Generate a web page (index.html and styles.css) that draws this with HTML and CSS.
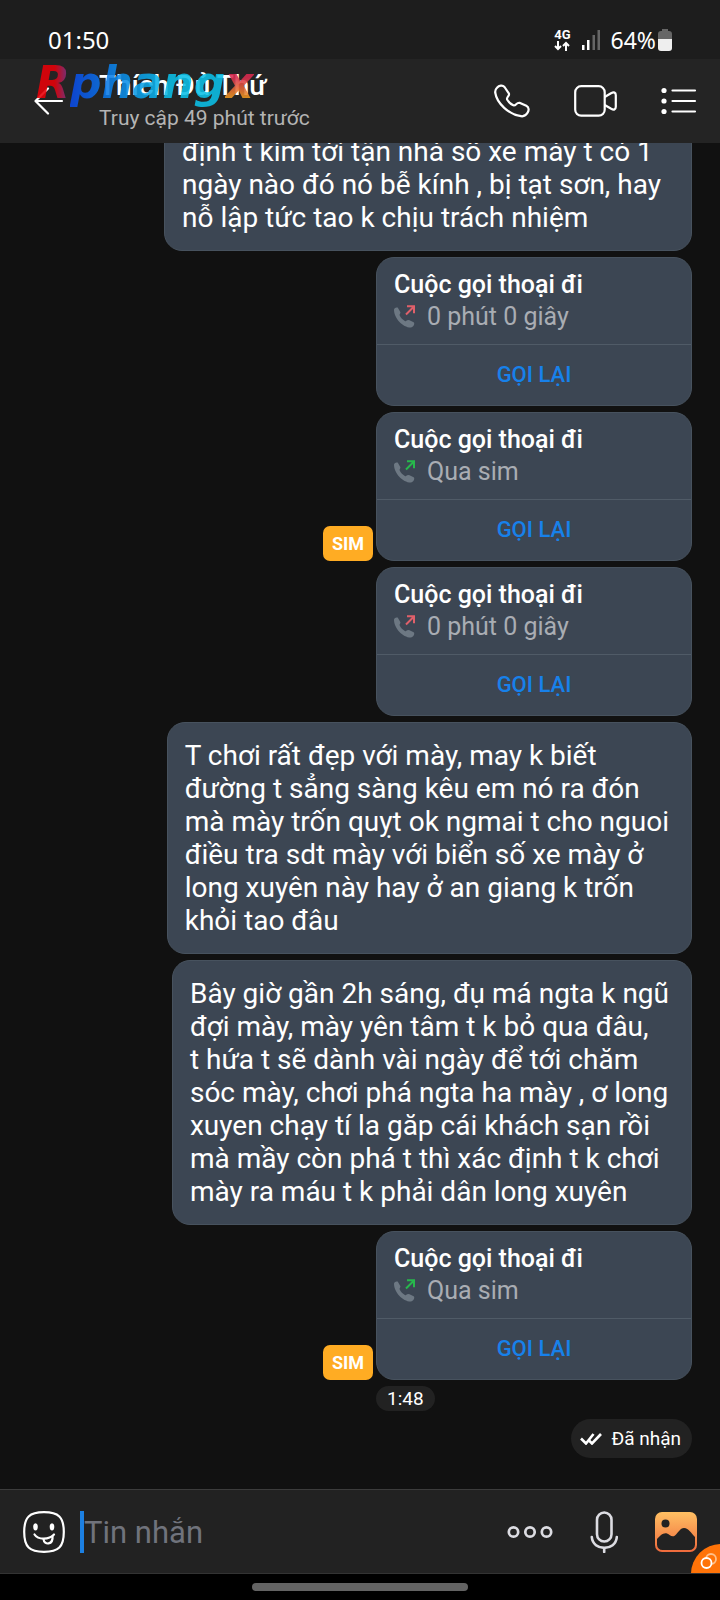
FILE: index.html
```html
<!DOCTYPE html>
<html lang="vi">
<head>
<meta charset="utf-8">
<meta name="viewport" content="width=device-width, initial-scale=1">
<title>Thích Đủ Thứ</title>
<link rel="stylesheet" href="styles.css">
</head>
<body>
<svg class="sprite" aria-hidden="true">
  <symbol id="call-out" viewBox="0 0 22 24">
    <path d="M0 4.800C0 3 2 1.900 3.700 2.600l2.600 4.300c.6 1-.8 2.200-.8 3.200 1 2.800 3.500 5 5.700 6.100 1 .3 1.600-1.200 3-1.200 1.500 0 4.200 1.700 5.800 2.500.8 1.600-.5 4.600-3.200 5.100C8.500 22.600 0 13.100 0 4.800z" fill="#6d7883"/>
    <path d="M12 9.500 19.500 2M13 1.200h7v7" fill="none" stroke="currentColor" stroke-width="2"/>
  </symbol>
</svg>
<div class="phone">
  <div class="status">
    <time class="status__clock">01:50</time>
    <div class="status__right">
      <div class="network"><span>4G</span>
        <svg width="16" height="10" viewBox="0 0 16 10" fill="none" stroke="#fff" stroke-width="2"><path d="M4 0v8M1 5l3 3 3-3M12 10V2M9 5l3-3 3 3"/></svg>
      </div>
      <svg class="signal" width="18" height="20" viewBox="0 0 18 20"><path d="M0 15h2.500v5H0zM5 10h2.500v10H5z" fill="#fff"/><path d="M10.500 5H13v15h-2.500zM15.500 0H18v20h-2.500z" fill="#666"/></svg>
      <span class="status__percent">64%</span>
      <svg class="battery" width="14" height="22" viewBox="0 0 14 22"><path d="M4 0h6v2h1a3 3 0 0 1 3 3v6H0V5a3 3 0 0 1 3-3h1z" fill="#666"/><path d="M0 10h14v9a3 3 0 0 1-3 3H3a3 3 0 0 1-3-3z" fill="#eee"/></svg>
    </div>
  </div>

  <header class="header">
    <button class="icon-button header__back" aria-label="Quay lại">
      <svg width="30" height="28" viewBox="0 0 30 28" fill="none" stroke="#fff" stroke-width="2.200" stroke-linecap="round" stroke-linejoin="round"><path d="M28 14H2M14 1.500 1.500 14 14 26.500"/></svg>
    </button>
    <div class="contact">
      <h1 class="contact__name">Thích Đủ Thứ</h1>
      <p class="contact__seen">Truy cập 49 phút trước</p>
    </div>
    <div class="watermark"><span class="watermark__r">R</span><span class="watermark__mid">phang</span><span class="watermark__x">x</span></div>
    <nav class="header__actions">
      <button class="icon-button" aria-label="Gọi thoại">
        <svg width="36" height="34" viewBox="0 0 36 34" fill="none" stroke="#fff" stroke-width="2.200" stroke-linejoin="round"><path d="M3 3.800C5 1.500 8.500.7 10.500 3l4.300 6.300c1.400 2.400-2.600 3.600-1.700 6.200 1.600 2.700 3.800 4.800 6.200 5.800 2.700.8 3-3 6.200-2.500l6.800 3c3 1.600 2.700 4.600 1.200 7-1.200 2.200-3.700 3.800-6.500 3.400C15 30.500 2.800 19.500 1.200 8.500 1 6.500 1.600 5.200 3 3.800z"/></svg>
      </button>
      <button class="icon-button" aria-label="Gọi video">
        <svg width="43" height="32" viewBox="0 0 43 32" fill="none" stroke="#fff" stroke-width="2.200" stroke-linejoin="round"><rect x="1.200" y="1.200" width="29.500" height="29.500" rx="6"/><path d="M30.700 12 37 8.200c3-1.400 4.800-.8 4.800 2v11.600c0 2.800-2 3.400-4.600 2L30.700 20"/></svg>
      </button>
      <button class="icon-button" aria-label="Tùy chọn">
        <svg width="36" height="28" viewBox="0 0 36 28" fill="#fff"><circle cx="3" cy="3.500" r="2.600"/><circle cx="3" cy="14" r="2.600"/><circle cx="3" cy="24.500" r="2.600"/><path d="M11.500 3.500H34M11.500 14H34M11.500 24.500H34" stroke="#fff" stroke-width="2.200" stroke-linecap="round"/></svg>
      </button>
    </nav>
  </header>

  <main class="chat">
    <p class="bubble bubble--wide">định t kím tới tận nhà số xe máy t có 1<br>ngày nào đó nó bễ kính , bị tạt sơn, hay<br>nỗ lập tức tao k chịu trách nhiệm</p>

    <div class="row">
      <section class="call">
        <div class="call__info"><h2 class="call__title">Cuộc gọi thoại đi</h2>
          <p class="call__detail"><svg class="call__icon call__icon--missed"><use href="#call-out"/></svg>0 phút 0 giây</p></div>
        <button class="call__again">GỌI LẠI</button>
      </section>
    </div>
    <div class="row">
      <span class="sim">SIM</span>
      <section class="call">
        <div class="call__info"><h2 class="call__title">Cuộc gọi thoại đi</h2>
          <p class="call__detail"><svg class="call__icon"><use href="#call-out"/></svg>Qua sim</p></div>
        <button class="call__again">GỌI LẠI</button>
      </section>
    </div>
    <div class="row">
      <section class="call">
        <div class="call__info"><h2 class="call__title">Cuộc gọi thoại đi</h2>
          <p class="call__detail"><svg class="call__icon call__icon--missed"><use href="#call-out"/></svg>0 phút 0 giây</p></div>
        <button class="call__again">GỌI LẠI</button>
      </section>
    </div>

    <p class="bubble">T chơi rất đẹp với mày, may k biết<br>đường t sẳng sàng kêu em nó ra đón<br>mà mày trốn quỵt ok ngmai t cho nguoi<br>điều tra sdt mày với biển số xe mày ở<br>long xuyên này hay ở an giang k trốn<br>khỏi tao đâu</p>
    <p class="bubble">Bây giờ gần 2h sáng, đụ má ngta k ngũ<br>đợi mày, mày yên tâm t k bỏ qua đâu,<br>t hứa t sẽ dành vài ngày để tới chăm<br>sóc mày, chơi phá ngta ha mày , ơ long<br>xuyen chạy tí la găp cái khách sạn rồi<br>mà mầy còn phá t thì xác định t k chơi<br>mày ra máu t k phải dân long xuyên</p>

    <div class="row">
      <span class="sim">SIM</span>
      <section class="call">
        <div class="call__info"><h2 class="call__title">Cuộc gọi thoại đi</h2>
          <p class="call__detail"><svg class="call__icon"><use href="#call-out"/></svg>Qua sim</p></div>
        <button class="call__again">GỌI LẠI</button>
      </section>
    </div>
    <div class="sent-at"><time class="sent-at__time">1:48</time></div>
    <div class="receipt">
      <svg width="22" height="12" viewBox="0 0 22 12" fill="none" stroke="#fff" stroke-width="2.600"><path d="M1 5.500l5 5L13.500 1M9.500 8l2.500 2.500L21 1"/></svg>
      <span>Đã nhận</span>
    </div>
  </main>

  <footer class="composer">
    <button class="icon-button" aria-label="Biểu cảm">
      <svg width="42" height="42" viewBox="0 0 42 42" fill="none" stroke="#fff" stroke-width="2.200"><path d="M21 1.200c14.500 0 19.800 4.800 19.800 19.800S35.500 40.800 21 40.800 1.200 36 1.200 21 6.500 1.200 21 1.200z"/><ellipse cx="12.500" cy="15.800" rx="2.300" ry="3.600" fill="#fff" stroke="none"/><ellipse cx="29" cy="15.800" rx="2.300" ry="3.600" fill="#fff" stroke="none"/><path d="M11.500 23.500c3.500 5.500 14.500 5.500 19.500 0" stroke-linecap="round"/><path d="M20.500 28c.5 6.500 10 6.500 9-3.500" /></svg>
    </button>
    <input class="composer__input" type="text" placeholder="Tin nhắn" aria-label="Tin nhắn">
    <div class="composer__actions">
      <button class="icon-button" aria-label="Thêm">
        <svg width="46" height="14" viewBox="0 0 46 14" fill="none" stroke="#dcdce2" stroke-width="2.700"><circle cx="6.500" cy="7" r="4.700"/><circle cx="23" cy="7" r="4.700"/><circle cx="39.500" cy="7" r="4.700"/></svg>
      </button>
      <button class="icon-button" aria-label="Ghi âm">
        <svg width="28" height="42" viewBox="0 0 28 42" fill="none" stroke="#dcdce2" stroke-width="2.600" stroke-linecap="round"><rect x="7" y="1.500" width="14.500" height="29" rx="7.250"/><path d="M1.800 26c1 14.500 24 14.500 25 0M14.200 37v4"/></svg>
      </button>
      <button class="icon-button" aria-label="Hình ảnh">
        <svg width="42" height="40" viewBox="0 0 42 40"><defs><linearGradient id="photo" x1="0" y1="0" x2="0" y2="1"><stop stop-color="#ffc063"/><stop offset="1" stop-color="#ef6a3c"/></linearGradient></defs><rect width="42" height="40" rx="7" fill="url(#photo)"/><circle cx="10.500" cy="11.500" r="4" fill="#222"/><path d="M2 27c3-3 6-6.500 10-5.500 3 .8 4.500 4.500 8 2 3-2.300 5-7.500 9-7.500 5 0 7 5.500 11 9v7.500a5.500 5.500 0 0 1-5.500 5.500h-27A5.500 5.500 0 0 1 2 32.500z" fill="#222"/></svg>
      </button>
    </div>
    <svg class="corner" width="29" height="29" viewBox="0 0 29 29" aria-hidden="true"><circle cx="30" cy="30" r="30" fill="#ff7308"/><g fill="none"><circle cx="20" cy="15" r="5" stroke="#ffc08a" stroke-width="1.800"/><circle cx="15.500" cy="19" r="5" fill="#ff7308" stroke="#fff" stroke-width="1.800"/></g></svg>
  </footer>
  <div class="home"><span class="home__bar"></span></div>
</div>
</body>
</html>
```
FILE: styles.css
```css
* { box-sizing: border-box; }
body {
  margin: 0;
  background: #111;
  color: #fff;
  font-family: Roboto, "Noto Sans", sans-serif;
}
h1, h2, p { margin: 0; }
button {
  padding: 0;
  border: 0;
  background: none;
  color: inherit;
  font: inherit;
}
svg { display: block; flex: none; }
.sprite { position: absolute; width: 0; height: 0; }
.icon-button { display: flex; align-items: center; }
.phone {
  display: flex;
  flex-direction: column;
  height: 100vh;
  overflow: hidden;
}

.status {
  display: flex;
  justify-content: space-between;
  align-items: center;
  padding: 22px 48px 1px;
  background: #1d1d1d;
  font-family: "Noto Sans", sans-serif;
  line-height: 36px;
}
.status__clock { font-size: 24px; }
.status__right { display: flex; align-items: center; }
.status__percent { margin-left: 11px; font-size: 23px; }
.network {
  display: flex;
  flex-direction: column;
  align-items: center;
  margin-right: 11px;
  font: bold 13px/12px Roboto, sans-serif;
}
.battery { margin-left: 2px; }

.header {
  position: relative;
  display: flex;
  align-items: center;
  padding: 9px 23px 10px 34px;
  background: #242424;
}
.header__back { width: 65px; }
.contact { flex: 1; }
.contact__name { font-size: 28px; font-weight: 500; line-height: 35px; }
.contact__seen { color: #b4b4b4; font-size: 21px; line-height: 30px; }
.header__actions { display: flex; align-items: center; gap: 44px; }
.watermark {
  position: absolute;
  top: 0;
  left: 36px;
  font: italic bold 44px/48px "DejaVu Sans", sans-serif;
  opacity: .88;
}
.watermark span { background-clip: text; -webkit-background-clip: text; color: transparent; }
.watermark .watermark__r { background-image: linear-gradient(90deg, #e80008 55%, #6b3c9c); }
.watermark .watermark__mid { background-image: linear-gradient(90deg, #0a49e8, #0b86e8 30%, #0bc0e8 65%); }
.watermark .watermark__x { background-image: linear-gradient(180deg, #d92a50 40%, #ee9a20 80%); }

.chat {
  flex: 1;
  min-height: 0;
  overflow: hidden;
  display: flex;
  flex-direction: column;
  justify-content: flex-end;
  align-items: flex-end;
  gap: 6px;
  padding: 0 28px 31px;
}
.chat > * { flex: none; }
.bubble {
  padding: 16px 22px 16px 17px;
  border: 1px solid #47525e;
  border-radius: 18px;
  background: #3c4653;
  font-size: 28px;
  line-height: 33px;
}
.bubble--wide { min-width: 528px; padding-top: 48px; }
.row { display: flex; align-items: flex-end; gap: 3px; }
.sim {
  padding: 0 9px;
  border-radius: 7px;
  background: #ffac23;
  font-size: 18px;
  font-weight: bold;
  line-height: 35px;
}
.call {
  width: 316px;
  border: 1px solid #47525e;
  border-radius: 18px;
  background: #3c4653;
  overflow: hidden;
}
.call__info { padding: 11px 17px 12px; }
.call__title { font-size: 25px; font-weight: 500; line-height: 32px; }
.call__detail {
  display: flex;
  align-items: center;
  gap: 11px;
  color: #a9adb3;
  font-size: 25px;
  line-height: 31px;
}
.call__icon { width: 22px; height: 24px; color: #27b84c; }
.call__icon--missed { color: #e0606a; }
.call__again {
  width: 100%;
  border-top: 1px solid #505b67;
  color: #1781ea;
  font-size: 22px;
  font-weight: 500;
  line-height: 60px;
}
.sent-at { width: 316px; }
.sent-at__time {
  display: inline-block;
  padding: 0 11px;
  border-radius: 13px;
  background: #222;
  font-size: 19px;
  line-height: 25px;
  vertical-align: top;
}
.receipt {
  display: flex;
  align-items: center;
  gap: 9px;
  margin-top: 2px;
  padding: 0 11px 0 9px;
  border-radius: 20px;
  background: #222;
  font-size: 19px;
  line-height: 39px;
}

.composer {
  position: relative;
  display: flex;
  align-items: center;
  padding: 21px 23px 20px;
  border-top: 1px solid #3c3c3c;
  border-bottom: 1px solid #333;
  background: #222;
}
.composer__input {
  flex: 1;
  min-width: 0;
  height: 42px;
  margin-left: 15px;
  padding: 0;
  border: 0;
  border-left: 4px solid #1c80e2;
  outline: 0;
  background: none;
  color: #fff;
  font: 31px Roboto, sans-serif;
}
.composer__input::placeholder { color: #70737c; opacity: 1; }
.composer__actions { display: flex; align-items: center; gap: 37px; }
.corner { position: absolute; right: 0; bottom: 0; }
.home {
  display: flex;
  justify-content: center;
  padding: 9px 0;
  background: #000;
}
.home__bar { width: 30%; height: 8px; border-radius: 4px; background: #636363; }
```
